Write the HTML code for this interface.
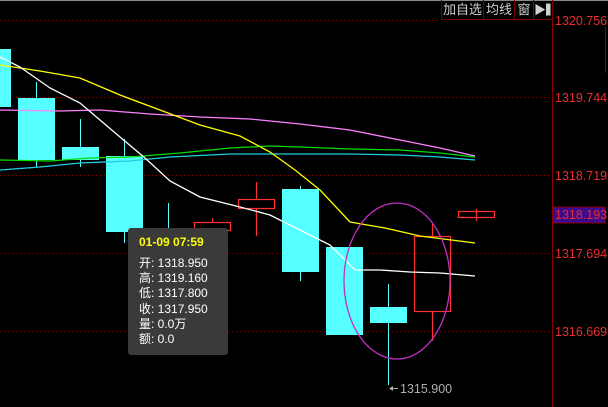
<!DOCTYPE html>
<html><head><meta charset="utf-8"><style>
html,body{margin:0;padding:0;background:#000;width:608px;height:407px;overflow:hidden;position:relative;font-family:"Liberation Sans","Noto Sans CJK SC",sans-serif}
.tb{position:absolute;top:0;height:20px;border:1px solid #7a0000;border-top:none;color:#d0d0d0;font-size:13px;line-height:20px;text-align:center;box-sizing:border-box}
.ax{position:absolute;left:555px;color:#e83030;font-size:12.5px;line-height:14px}
.tip{position:absolute;left:128px;top:228px;width:100px;height:127px;background:#3a3a3a;border-radius:3px;color:#fff;font-size:12px}
.tip div{position:absolute;left:11px;white-space:nowrap;line-height:14px}
</style></head><body>
<svg width="608" height="407" style="position:absolute;left:0;top:0">
<line x1="0" y1="0.5" x2="608" y2="0.5" stroke="#888" stroke-width="1"/>
<g stroke="#8a0000" stroke-dasharray="1,3" stroke-width="1">
<line x1="0" y1="20.5" x2="440" y2="20.5"/>
<line x1="0" y1="97.5" x2="552" y2="97.5"/>
<line x1="0" y1="175.5" x2="552" y2="175.5"/>
<line x1="0" y1="253.5" x2="552" y2="253.5"/>
<line x1="0" y1="331.5" x2="552" y2="331.5"/>
</g>
<line x1="552.5" y1="0" x2="552.5" y2="407" stroke="#8a0000"/>
<rect x="553" y="207" width="52" height="16" fill="#3c0a8c" stroke="#8a0000"/>
<line x1="605.5" y1="27" x2="605.5" y2="73" stroke="#8a0000"/>
<!-- cyan candles -->
<g fill="#55ffff" stroke="#55ffff">
<line x1="36.5" y1="82" x2="36.5" y2="167"/>
<line x1="80.5" y1="119" x2="80.5" y2="167"/>
<line x1="124.5" y1="139" x2="124.5" y2="243"/>
<line x1="168.5" y1="203" x2="168.5" y2="240"/>
<line x1="300.5" y1="186" x2="300.5" y2="281"/>
<line x1="388.5" y1="284" x2="388.5" y2="385"/>
<rect x="0" y="49" width="11" height="58" stroke="none"/>
<rect x="18" y="98" width="37" height="62" stroke="none"/>
<rect x="62" y="147" width="37" height="13" stroke="none"/>
<rect x="106" y="156" width="37" height="76" stroke="none"/>
<rect x="282" y="189" width="37" height="83" stroke="none"/>
<rect x="326" y="247" width="37" height="88" stroke="none"/>
<rect x="370" y="307" width="37" height="16" stroke="none"/>
</g>
<!-- red candles -->
<g fill="none" stroke="#ff3030" stroke-width="1.2">
<line x1="212.5" y1="218" x2="212.5" y2="222"/>
<rect x="194.5" y="222.5" width="36" height="8"/>
<line x1="256.5" y1="182" x2="256.5" y2="199"/>
<line x1="256.5" y1="209" x2="256.5" y2="236"/>
<rect x="238.5" y="199.5" width="36" height="9"/>
<line x1="432.5" y1="224" x2="432.5" y2="236"/>
<line x1="432.5" y1="312" x2="432.5" y2="341"/>
<rect x="414.5" y="236.5" width="36" height="75"/>
<line x1="476.5" y1="209" x2="476.5" y2="221"/>
<rect x="458.5" y="211.5" width="36" height="6"/>
</g>
<!-- MA lines -->
<g fill="none" stroke-width="1.3">
<polyline stroke="#ff80ff" points="0,110 60,111 100,110 150,114 200,117 250,119 300,124 350,130 400,140 440,148 475,156"/>
<polyline stroke="#00dd00" points="0,160 50,161 90,158 130,157 180,153 230,148 270,146 300,147 350,149 400,150 440,153 475,157"/>
<polyline stroke="#20d0e0" points="0,170 40,167 80,163 130,161 170,157 230,154 270,154 300,154 350,154 400,155 440,157 475,160"/>
<polyline stroke="#ffff00" points="0,65 40,71 80,78 120,95 160,110 200,125 240,136 270,152 295,170 320,190 350,222 385,228 420,236 475,243"/>
<polyline stroke="#ffffff" points="0,57 20,67 50,88 80,103 120,137 145,158 170,181 200,197 240,207 270,215 300,230 330,245 355,270 380,270 410,272 440,273 475,276"/>
</g>
<ellipse cx="397" cy="281" rx="53" ry="78" fill="none" stroke="#c030c0" stroke-width="1.3"/>
<line x1="390" y1="388.5" x2="398" y2="388.5" stroke="#aaa"/>
<polygon points="389,388.5 393,386 393,391" fill="#aaa"/>
<text x="400" y="393" fill="#b0b0b0" font-size="12.5" font-family="Liberation Sans">1315.900</text>
</svg>
<div class="tb" style="left:441px;width:43px">加自选</div>
<div class="tb" style="left:483px;width:32px">均线</div>
<div class="tb" style="left:514px;width:20px">窗</div>
<div class="tb" style="left:533px;width:20px;font-size:12px">▶▍</div>
<div class="ax" style="top:14px">1320.756</div>
<div class="ax" style="top:91px">1319.744</div>
<div class="ax" style="top:169px">1318.719</div>
<div class="ax" style="top:208px">1318.193</div>
<div class="ax" style="top:247px">1317.694</div>
<div class="ax" style="top:325px">1316.669</div>
<div class="tip">
<div style="top:7px;color:#ffff00;font-weight:bold">01-09 07:59</div>
<div style="top:28px">开: 1318.950</div>
<div style="top:43px">高: 1319.160</div>
<div style="top:58px">低: 1317.800</div>
<div style="top:74px">收: 1317.950</div>
<div style="top:89px">量: 0.0万</div>
<div style="top:104px">额: 0.0</div>
</div>
</body></html>
